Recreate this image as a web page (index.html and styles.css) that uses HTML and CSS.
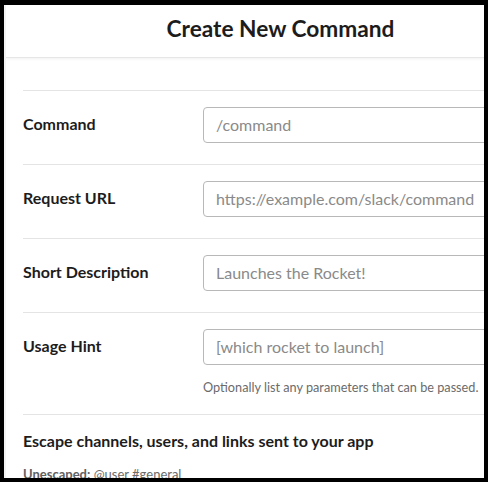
FILE: index.html
```html
<!DOCTYPE html>
<html>
<head>
<meta charset="utf-8">
<link rel="stylesheet" href="styles.css">
</head>
<body>
<div class="frame">
  <div class="modal">
    <header class="modal-header">
      <h1 class="title">Create New Command</h1>
    </header>
    <div class="modal-body">
      <div class="field">
        <label class="label">Command</label>
        <div class="control"><div class="input placeholder">/command</div></div>
      </div>
      <div class="field">
        <label class="label">Request URL</label>
        <div class="control"><div class="input placeholder">https://example.com/slack/command</div></div>
      </div>
      <div class="field">
        <label class="label">Short Description</label>
        <div class="control"><div class="input placeholder">Launches the Rocket!</div></div>
      </div>
      <div class="field field-hint">
        <label class="label">Usage Hint</label>
        <div class="control">
          <div class="input placeholder">[which rocket to launch]</div>
          <p class="help">Optionally list any parameters that can be passed.</p>
        </div>
      </div>
      <div class="section">
        <h2 class="section-title">Escape channels, users, and links sent to your app</h2>
        <p class="section-note"><span class="note-key">Unescaped:</span> @user #general</p>
      </div>
    </div>
  </div>
</div>
</body>
</html>
```
FILE: styles.css
```css
* { box-sizing: border-box; }
html, body {
  margin: 0;
  padding: 0;
  background: #000;
  width: 488px;
  height: 482px;
  overflow: hidden;
}
.frame {
  width: 488px;
  height: 482px;
  padding: 5px 4px 4px 4px;
}
.modal {
  width: 480px;
  height: 473px;
  overflow: hidden;
  background: #fff;
  border-left: 2px solid #f3f3f3;
  font-family: Lato, "Noto Sans", sans-serif;
  color: #1d1c1d;
}
.modal-header {
  width: 549px;
  height: 53px;
  display: flex;
  align-items: center;
  justify-content: center;
  border-bottom: 1px solid #e6e6e6;
  box-shadow: 0 1px 3px rgba(0,0,0,0.06);
}
.title {
  margin: 0;
  font-size: 22.7px;
  font-weight: 700;
  line-height: 1;
  padding-bottom: 4px;
}
.modal-body {
  width: 549px;
  padding: 32px 0 0 17px;
}
.field {
  display: flex;
  align-items: flex-start;
  border-top: 1px solid #e4e4e4;
  padding: 16px 0 21px 0;
}
.field-hint { padding-bottom: 18px; }
.label {
  width: 180px;
  flex: none;
  font-size: 16px;
  font-weight: 700;
  line-height: 33px;
}
.control { flex: 1; }
.input {
  height: 36px;
  border: 1px solid #b8b8b8;
  border-radius: 4px;
  padding: 0 12px;
  font-size: 16px;
  line-height: 33px;
  white-space: nowrap;
}
.placeholder { color: #8a8a8a; }
.help {
  margin: 13px 0 0 0;
  font-size: 12.7px;
  line-height: 18px;
  color: #6b6b6b;
  white-space: nowrap;
}
.section {
  border-top: 1px solid #e4e4e4;
  padding-top: 16px;
}
.section-title {
  margin: 0;
  font-size: 16px;
  font-weight: 700;
  line-height: 20px;
}
.section-note {
  margin: 14px 0 0 0;
  font-size: 13px;
  line-height: 18px;
  color: #6b6b6b;
}
.note-key { font-weight: 700; color: #616061; }
```
